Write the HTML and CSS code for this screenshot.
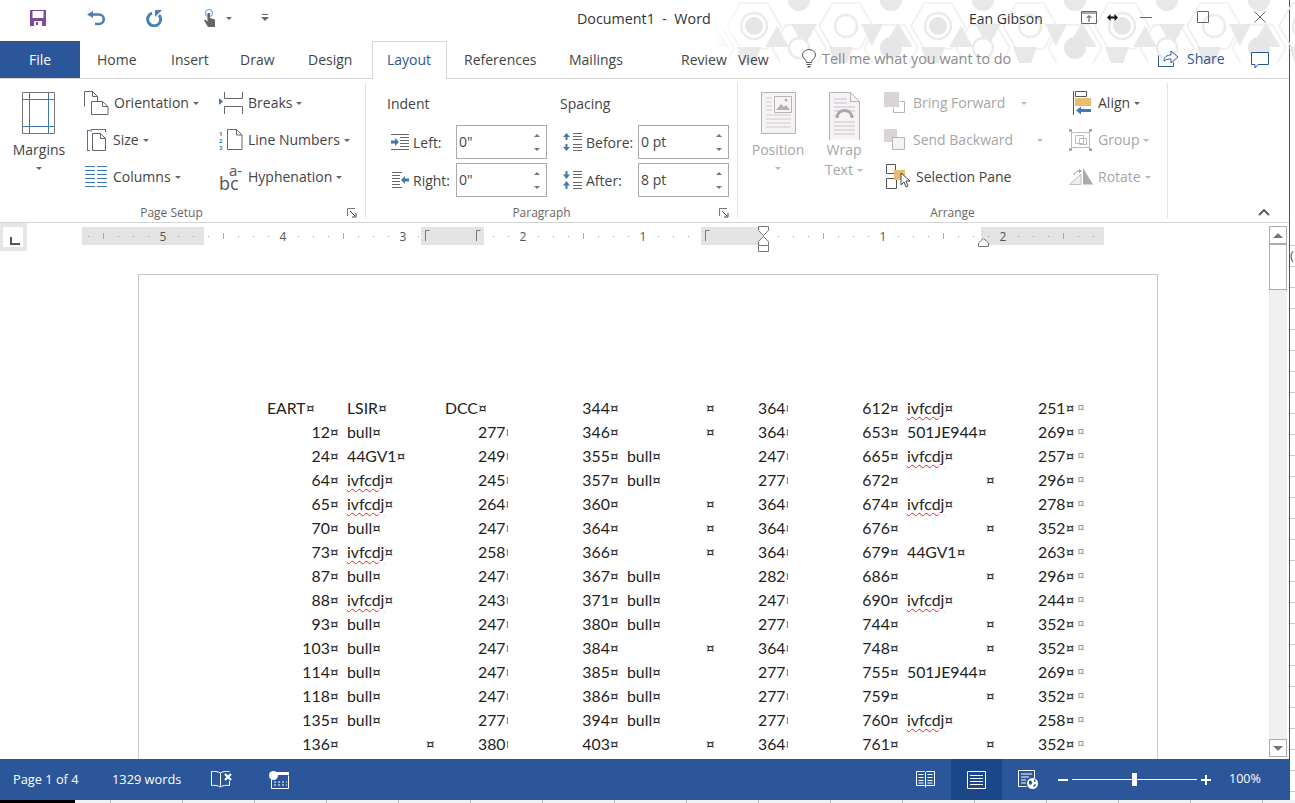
FILE: index.html
```html
<!DOCTYPE html>
<html lang="en">
<head>
    <meta charset="UTF-8">
    <title>Document1 - Word</title>
    <link rel="stylesheet" href="styles.css">
</head>
<body>

<div class="desktop">
    <div class="word">

        <!-- background art behind title bar -->
        <svg class="art" width="580" height="63" viewBox="0 0 580 63">
            <defs>
                <path id="hexa" d="M-27 0L-13.500 -23H13.500L27 0L13.500 23H-13.500Z"/>
                <pattern id="hex" width="184" height="63" patternUnits="userSpaceOnUse" x="84" y="0">
                    <g fill="none" stroke="#eeeeee" stroke-width="1.5">
                        <use href="#hexa" x="0" y="48"/>
                        <use href="#hexa" x="92" y="48"/>
                        <use href="#hexa" x="184" y="48"/>
                        <use href="#hexa" x="47" y="26"/>
                        <use href="#hexa" x="139" y="26"/>
                    </g>
                    <g fill="#e8e8e8">
                        <path d="M-8 24h26L5 47z"/>
                        <path d="M176 24h26L189 47z"/>
                        <path d="M84 47L99 23L114 47z"/>
                        <path d="M122 47h24l-6 16h-12z"/>
                        <path d="M30 47h24l-6 16h-12z"/>
                        <path d="M62 24h22L73 46z"/>
                        <path d="M150 47L162 26L174 47z"/>
                        <circle cx="0" cy="0" r="11"/>
                        <circle cx="184" cy="0" r="11"/>
                        <circle cx="92" cy="0" r="11"/>
                    </g>
                    <g fill="#fff" stroke="#ebebeb" stroke-width="2.500">
                        <circle cx="0" cy="48" r="10"/>
                        <circle cx="184" cy="48" r="10"/>
                        <circle cx="47" cy="26" r="11"/>
                        <circle cx="139" cy="26" r="13"/>
                    </g>
                    <circle cx="92" cy="48" r="11" fill="#e6e6e6"/>
                    <circle cx="139" cy="26" r="9" fill="#e6e6e6"/>
                </pattern>
            </defs>
            <rect width="580" height="63" fill="url(#hex)"/>
        </svg>

        <!-- title bar -->
        <div class="titlebar">
            <div class="qat">
                <svg width="16" height="16" viewBox="0 0 16 16"><path fill="#7c4a9e" d="M0 0h16v16H0z"/><path fill="#fff" d="M2.500 1h11v7h-11zM4 11h8v5H4z"/><path fill="#7c4a9e" d="M6 12h2v3H6z"/></svg>
                <svg class="q-undo" width="18" height="15" viewBox="0 0 18 15"><path fill="none" stroke="#4a7fb5" stroke-width="2.600" d="M5 3.500h7a4.500 4.500 0 0 1 0 9.500H8"/><path fill="#4a7fb5" d="M0 3.500L6 0v7z"/></svg>
                <svg class="q-redo" width="17" height="17" viewBox="0 0 17 17"><path fill="none" stroke="#4a7fb5" stroke-width="3" d="M6 3.200A6.500 6.500 0 1 0 13 5"/><path fill="#4a7fb5" d="M9 0v7l7-7z"/></svg>
                <svg class="q-touch" width="14" height="18" viewBox="0 0 14 18"><circle cx="6" cy="4" r="3.500" fill="none" stroke="#8fb6dc" stroke-width="1.500"/><path fill="#666" d="M4.500 4h2.500v5l5 1.500V18H5L1 11.500l1-1 2.500 2z"/></svg>
                <span class="caret q-caret"></span>
                <svg class="q-more" width="8" height="8" viewBox="0 0 8 8"><path fill="#666" d="M1 0h6v1H1zM0 3h8L4 7z"/></svg>
            </div>
            <div class="doc-title">Document1&nbsp; -&nbsp; Word</div>
            <div class="user">Ean Gibson</div>
            <div class="win-btns">
                <svg width="16" height="13" viewBox="0 0 16 13"><path fill="none" stroke="#666" d="M.5.5h15v12H.5z"/><path fill="#aaa" d="M1 1h14v2H1z"/><path fill="none" stroke="#444" d="M8 11V5M5.500 7L8 4.500 10.500 7"/></svg>
                <svg class="w-cursor" width="11" height="7" viewBox="0 0 11 7"><path fill="#111" d="M0 3.500L3.500 0v2.500h4V0L11 3.500 7.500 7V4.500h-4V7z"/></svg>
                <svg class="w-min" width="12" height="1"><path fill="#666" d="M0 0h12v1H0z"/></svg>
                <svg class="w-max" width="12" height="12" viewBox="0 0 12 12"><path fill="none" stroke="#666" d="M.5.5h11v11H.5z"/></svg>
                <svg class="w-close" width="12" height="12" viewBox="0 0 12 12"><path fill="none" stroke="#666" d="M.5.5l11 11M11.500.5l-11 11"/></svg>
            </div>
        </div>

        <!-- tabs -->
        <div class="tabs">
            <div class="tab tab-file">File</div>
            <div class="tab tab-home">Home</div>
            <div class="tab tab-insert">Insert</div>
            <div class="tab tab-draw">Draw</div>
            <div class="tab tab-design">Design</div>
            <div class="tab tab-layout">Layout</div>
            <div class="tab tab-refs">References</div>
            <div class="tab tab-mail">Mailings</div>
            <div class="tab tab-review">Review</div>
            <div class="tab tab-view">View</div>
            <div class="tell">
                <svg width="14" height="19" viewBox="0 0 14 19"><path fill="#fff" stroke="#555" d="M4.500 13.500c0-3-4-4-4-7.500a6.500 5.500 0 0 1 13 0c0 3.500-4 4.500-4 7.500z"/><path fill="#555" d="M4.500 15h5v1h-5zM5.500 17h3v1.500h-3z"/></svg>
                <span>Tell me what you want to do</span>
            </div>
            <div class="share">
                <svg width="21" height="17" viewBox="0 0 21 17"><path fill="none" stroke="#2b579a" d="M.5 5.500v11h15v-4"/><path fill="#fff" stroke="#2b579a" d="M6 11c0-4 3-6 7-6V1l7 6-7 6V9c-3 0-5 .5-7 2z"/></svg>
                <span>Share</span>
            </div>
            <svg class="comment" width="18" height="17" viewBox="0 0 18 17"><path fill="#fff" stroke="#2b579a" d="M.5.5h17v12H7l-3 3.500v-3.500H.5z"/></svg>
        </div>

        <!-- ribbon -->
        <div class="ribbon">

            <div class="group group-setup">
                <div class="group-body">
                    <div class="big big-margins">
                        <svg width="34" height="42" viewBox="0 0 34 42"><path fill="#fff" stroke="#777" d="M.5.5h32v41H.5z"/><path fill="none" stroke="#3f78b5" d="M7.500 1v40M26.500 1v40M1 7.500h32M1 34.500h32"/></svg>
                        <span>Margins</span>
                        <span class="caret"></span>
                    </div>
                    <div class="col col-page">
                        <div class="item"><svg width="25" height="24" viewBox="0 0 25 24"><path fill="#fff" stroke="#666" d="M.5 15.500V.5h8l5 5v5"/><path fill="none" stroke="#666" d="M8.500.5v5h5"/><path fill="#fff" stroke="#666" d="M7.500 10.500h11l5.500 5v8H7.500z"/><path fill="none" stroke="#666" d="M18.500 10.500v5h5.500"/></svg><span>Orientation</span><span class="caret"></span></div>
                        <div class="item item-size"><svg width="19" height="22" viewBox="0 0 19 22"><path fill="none" stroke="#3f78b5" d="M.5 2v20M0 1.500h3M0 21.500h3M4 .5h15M4 0v3M18.500 0v3"/><path fill="#fff" stroke="#666" d="M5.500 4.500h8l5 5v12h-13z"/><path fill="none" stroke="#666" d="M13.500 4.500v5h5"/></svg><span>Size</span><span class="caret"></span></div>
                        <div class="item item-cols"><svg width="22" height="21" viewBox="0 0 22 21"><path fill="none" stroke="#3f78b5" d="M0 .5h10M12 .5h10M0 4.500h10M12 4.500h10M0 8.500h10M12 8.500h10M0 12.500h10M12 12.500h10M0 16.500h10M12 16.500h10M0 20.500h10M12 20.500h10"/></svg><span>Columns</span><span class="caret"></span></div>
                    </div>
                    <div class="col col-breaks">
                        <div class="item"><svg width="24" height="22" viewBox="0 0 24 22"><path fill="#3f78b5" d="M0 6l4 3.500L0 13z"/><path fill="none" stroke="#666" d="M5.500 0v6.500h18V0M5.500 22v-7.500h18V22"/></svg><span>Breaks</span><span class="caret"></span></div>
                        <div class="item"><svg width="24" height="21" viewBox="0 0 24 21"><path fill="#fff" stroke="#666" d="M8.500.5h9l5.500 5.500v14.500H8.500z"/><path fill="none" stroke="#666" d="M17.500.5V6h5.500"/><text x="0" y="6.500" class="ln">1</text><text x="0" y="13.500" class="ln">2</text><text x="0" y="20.500" class="ln">3</text></svg><span>Line Numbers</span><span class="caret"></span></div>
                        <div class="item"><span class="hy"><i>a-</i><b>bc</b></span><span>Hyphenation</span><span class="caret"></span></div>
                    </div>
                </div>
                <div class="group-label">Page Setup<svg class="launcher" width="10" height="10" viewBox="0 0 10 10"><path fill="none" stroke="#777" d="M.5 8V.5H8"/><path fill="none" stroke="#444" d="M3 3l5 5M5 9h4V5"/></svg></div>
            </div>

            <div class="group group-para">
                <div class="group-body para-grid">
                    <div class="para-col para-indent">
                        <div class="para-head">Indent</div>
                        <div class="field">
                            <svg width="18" height="16" viewBox="0 0 18 16"><path fill="#666" d="M0 0h18v1H0zM9 3h9v1H9zM9 6h9v1H9zM9 9h9v1H9zM9 12h9v1H9zM0 15h18v1H0z"/><path fill="#3f78b5" d="M0 6.500h4V4l4 4-4 4V9.500H0z"/></svg>
                            <label>Left:</label>
                            <div class="spin"><span>0"</span><i class="up"></i><i class="down"></i></div>
                        </div>
                        <div class="field">
                            <svg width="18" height="16" viewBox="0 0 18 16"><path fill="#666" d="M1 0h10v1H1zM1 3h8v1H1zM1 6h8v1H1zM1 9h8v1H1zM1 12h8v1H1zM1 15h10v1H1z"/><path fill="#3f78b5" d="M18 6.500h-4V4l-4 4 4 4V9.500h4z"/></svg>
                            <label>Right:</label>
                            <div class="spin"><span>0"</span><i class="up"></i><i class="down"></i></div>
                        </div>
                    </div>
                    <div class="para-col para-spacing">
                        <div class="para-head">Spacing</div>
                        <div class="field">
                            <svg width="20" height="20" viewBox="0 0 20 20"><path fill="#666" d="M11 1h9v1h-9zM11 4h9v1h-9zM11 7h9v1h-9zM11 12h9v1h-9zM11 15h9v1h-9zM11 18h9v1h-9z"/><path fill="#3f78b5" d="M1 5l3.500-4L8 5H5.500v3h-2V5zM1 15l3.500 4L8 15H5.500v-3h-2v3z"/></svg>
                            <label>Before:</label>
                            <div class="spin"><span>0 pt</span><i class="up"></i><i class="down"></i></div>
                        </div>
                        <div class="field">
                            <svg width="20" height="20" viewBox="0 0 20 20"><path fill="#666" d="M11 1h9v1h-9zM11 4h9v1h-9zM11 7h9v1h-9zM11 12h9v1h-9zM11 15h9v1h-9zM11 18h9v1h-9z"/><path fill="#3f78b5" d="M1 4.500h2.500V1h2v3.500H8L4.500 9zM1 15.500h2.500V19h2v-3.500H8L4.500 11z"/></svg>
                            <label>After:</label>
                            <div class="spin"><span>8 pt</span><i class="up"></i><i class="down"></i></div>
                        </div>
                    </div>
                </div>
                <div class="group-label">Paragraph<svg class="launcher" width="10" height="10" viewBox="0 0 10 10"><path fill="none" stroke="#777" d="M.5 8V.5H8"/><path fill="none" stroke="#444" d="M3 3l5 5M5 9h4V5"/></svg></div>
            </div>

            <div class="group group-arrange">
                <div class="group-body">
                    <div class="big big-pos off">
                        <svg width="35" height="42" viewBox="0 0 35 42"><path fill="#f6f2f6" stroke="#b5b5b5" d="M.5.5h34v41H.5z"/><path fill="#f6f2f6" stroke="#b5b5b5" d="M13.500 4.500h17v16h-17z"/><path fill="#b5b0b5" d="M15 18l5-6 3 3 2-2 4 5z"/><circle cx="25" cy="8" r="1.500" fill="#b5b0b5"/><path fill="none" stroke="#ccc" d="M5 6h6M5 10h6M5 14h6M5 18h6M5 23h25M5 27h25M5 31h25M5 35h25"/></svg>
                        <span>Position</span>
                        <span class="caret"></span>
                    </div>
                    <div class="big big-wrap off">
                        <svg width="31" height="50" viewBox="0 0 31 50"><path fill="#f6f2f6" stroke="#b5b5b5" d="M.5.5h21l9 9v40H.5z"/><path fill="none" stroke="#b5b5b5" d="M21.500.5v9h9"/><path fill="none" stroke="#c5c5c5" d="M5 7h13M5 11h13M5 15h21M5 19h6M20 19h6M5 24h2M24 24h2M5 30h21M5 34h21M5 38h21M5 42h21"/><path fill="none" stroke="#a8a8a8" stroke-width="3" d="M8 26c0-10 15-10 15 0"/></svg>
                        <span class="wrap-word">Wrap</span>
                        <span class="wrap-text">Text<span class="caret"></span></span>
                    </div>
                    <div class="col col-order">
                        <div class="item off order-fwd"><svg width="21" height="21" viewBox="0 0 21 21"><path fill="#d8d4d8" d="M0 0h15v15H0z"/><path fill="none" stroke="#b5b5b5" d="M15.500 9.500h5v11h-11v-5"/></svg><span>Bring Forward</span><span class="caret"></span></div>
                        <div class="item off order-back"><svg width="21" height="21" viewBox="0 0 21 21"><path fill="#d8d4d8" d="M0 0h13v13H0z"/><path fill="#f6f2f6" stroke="#b5b5b5" d="M8.500 8.500h12v12h-12z"/></svg><span>Send Backward</span><span class="caret"></span></div>
                        <div class="item order-pane"><svg width="25" height="25" viewBox="0 0 25 25"><path fill="#fff" stroke="#555" d="M.5.5h9v9h-9zM.5 14.500h10v10H.5z"/><path fill="#e8bd72" d="M8 6h11v10H8z"/><path fill="#fff" stroke="#444" d="M15 9v12l3-3 2 5 2-1-2-5h4z"/></svg><span>Selection Pane</span></div>
                    </div>
                    <div class="col col-align">
                        <div class="item item-align"><svg width="18" height="24" viewBox="0 0 18 24"><path fill="none" stroke="#555" d="M.5 0v24M2.500.5h11v5h-11z"/><path fill="#e8bd72" d="M2 7h16v8H2z"/><path fill="#3f78b5" d="M3 19.500L8 15.500v2.500h10v3H8v2.500z"/></svg><span>Align</span><span class="caret"></span></div>
                        <div class="item off item-group"><svg width="23" height="22" viewBox="0 0 23 22"><path fill="none" stroke="#bbb" d="M2.500 3.500h18v15h-18zM6.500 6.500h8v8h-8zM10.500 9.500h7v6h-7z"/><path fill="#aaa" d="M0 0h3v3H0zM20 0h3v3h-3zM0 19h3v3H0zM20 19h3v3h-3z"/></svg><span>Group</span><span class="caret"></span></div>
                        <div class="item off item-rotate"><svg width="24" height="17" viewBox="0 0 24 17"><path fill="#f0eef0" stroke="#c0c0c0" d="M.5 16.500L12 6v10.500z"/><path fill="#aaa" d="M14 0l10 16.500H14z"/><path fill="none" stroke="#999" d="M5 7c1-3 3-4 6-4"/><path fill="#999" d="M10 1l3 2-3 2z"/></svg><span>Rotate</span><span class="caret"></span></div>
                    </div>
                </div>
                <div class="group-label">Arrange</div>
            </div>

            <svg class="collapse" width="12" height="7" viewBox="0 0 12 7"><path fill="none" stroke="#555" stroke-width="1.800" d="M1 6l5-5 5 5"/></svg>
        </div>

        <!-- ruler, page and scrollbar -->
        <div class="main">
            <div class="main-left">
                <div class="ruler-row">
                    <div class="tab-stop"><span></span></div>
                    <svg class="ruler" width="1030" height="36" viewBox="82 222 1030 36">
                        <defs>
                            <pattern id="dots" width="15" height="36" patternUnits="userSpaceOnUse" x="88" y="222">
                                <path fill="#9a9a9a" d="M0 14h1v1H0z"/>
                            </pattern>
                            <pattern id="bars" width="60" height="36" patternUnits="userSpaceOnUse" x="103" y="222">
                                <path fill="#aaa" d="M0 11h1v6H0z"/>
                            </pattern>
                        </defs>
                        <path fill="#e3e3e3" d="M82 227h1022v18H82z"/>
                        <path fill="#fff" d="M204 227h217v18H204zM484 227h217v18H484zM763 227h218v18H763z"/>
                        <path fill="url(#dots)" d="M82 227h1022v18H82z"/>
                        <path fill="url(#bars)" d="M82 227h1022v18H82z"/>
                        <path fill="#fff" d="M278 227h10v18h-10zM398 227h10v18h-10zM518 227h10v18h-10zM638 227h10v18h-10zM878 227h10v18h-10z"/>
                        <path fill="#e3e3e3" d="M158 227h10v18h-10zM998 227h10v18h-10zM421 227h63v18h-63zM701 227h62v18h-62z"/>
                        <g class="rnum">
                            <text x="163" y="241">5</text><text x="283" y="241">4</text><text x="403" y="241">3</text>
                            <text x="523" y="241">2</text><text x="643" y="241">1</text><text x="883" y="241">1</text><text x="1003" y="241">2</text>
                        </g>
                        <path fill="none" stroke="#777" d="M425.500 241v-10.500h4M476.500 241v-10.500h4M705.500 241v-10.500h4"/>
                        <path fill="#fff" stroke="#777" d="M758.500 226.500h10v4l-5 5-5-5z"/>
                        <path fill="#fff" stroke="#777" d="M763.500 236.500l5 5v4h-10v-4z"/>
                        <path fill="#fff" stroke="#777" d="M758.500 245.500h10v6h-10z"/>
                        <path fill="#fff" stroke="#777" d="M983.500 238.500l5 4.500v3.500h-10V243z"/>
                    </svg>
                </div>
                <div class="doc-scroll">
                    <div class="page">
                        <table class="sheet">
                            <tr><td class="h">EART¤</td><td>LSIR¤</td><td class="h">DCC¤</td><td>344¤</td><td class="e">¤</td><td><span class="cut">364¤</span></td><td>612¤</td><td><u>ivfcdj</u>¤</td><td>251¤<em>¤</em></td></tr>
                            <tr><td>12¤</td><td>bull¤</td><td><span class="cut">277¤</span></td><td>346¤</td><td class="e">¤</td><td><span class="cut">364¤</span></td><td>653¤</td><td>501JE944¤</td><td>269¤<em>¤</em></td></tr>
                            <tr><td>24¤</td><td>44GV1¤</td><td><span class="cut">249¤</span></td><td>355¤</td><td>bull¤</td><td><span class="cut">247¤</span></td><td>665¤</td><td><u>ivfcdj</u>¤</td><td>257¤<em>¤</em></td></tr>
                            <tr><td>64¤</td><td><u>ivfcdj</u>¤</td><td><span class="cut">245¤</span></td><td>357¤</td><td>bull¤</td><td><span class="cut">277¤</span></td><td>672¤</td><td class="e">¤</td><td>296¤<em>¤</em></td></tr>
                            <tr><td>65¤</td><td><u>ivfcdj</u>¤</td><td><span class="cut">264¤</span></td><td>360¤</td><td class="e">¤</td><td><span class="cut">364¤</span></td><td>674¤</td><td><u>ivfcdj</u>¤</td><td>278¤<em>¤</em></td></tr>
                            <tr><td>70¤</td><td>bull¤</td><td><span class="cut">247¤</span></td><td>364¤</td><td class="e">¤</td><td><span class="cut">364¤</span></td><td>676¤</td><td class="e">¤</td><td>352¤<em>¤</em></td></tr>
                            <tr><td>73¤</td><td><u>ivfcdj</u>¤</td><td><span class="cut">258¤</span></td><td>366¤</td><td class="e">¤</td><td><span class="cut">364¤</span></td><td>679¤</td><td>44GV1¤</td><td>263¤<em>¤</em></td></tr>
                            <tr><td>87¤</td><td>bull¤</td><td><span class="cut">247¤</span></td><td>367¤</td><td>bull¤</td><td><span class="cut">282¤</span></td><td>686¤</td><td class="e">¤</td><td>296¤<em>¤</em></td></tr>
                            <tr><td>88¤</td><td><u>ivfcdj</u>¤</td><td><span class="cut">243¤</span></td><td>371¤</td><td>bull¤</td><td><span class="cut">247¤</span></td><td>690¤</td><td><u>ivfcdj</u>¤</td><td>244¤<em>¤</em></td></tr>
                            <tr><td>93¤</td><td>bull¤</td><td><span class="cut">247¤</span></td><td>380¤</td><td>bull¤</td><td><span class="cut">277¤</span></td><td>744¤</td><td class="e">¤</td><td>352¤<em>¤</em></td></tr>
                            <tr><td>103¤</td><td>bull¤</td><td><span class="cut">247¤</span></td><td>384¤</td><td class="e">¤</td><td><span class="cut">364¤</span></td><td>748¤</td><td class="e">¤</td><td>352¤<em>¤</em></td></tr>
                            <tr><td>114¤</td><td>bull¤</td><td><span class="cut">247¤</span></td><td>385¤</td><td>bull¤</td><td><span class="cut">277¤</span></td><td>755¤</td><td>501JE944¤</td><td>269¤<em>¤</em></td></tr>
                            <tr><td>118¤</td><td>bull¤</td><td><span class="cut">247¤</span></td><td>386¤</td><td>bull¤</td><td><span class="cut">277¤</span></td><td>759¤</td><td class="e">¤</td><td>352¤<em>¤</em></td></tr>
                            <tr><td>135¤</td><td>bull¤</td><td><span class="cut">277¤</span></td><td>394¤</td><td>bull¤</td><td><span class="cut">277¤</span></td><td>760¤</td><td><u>ivfcdj</u>¤</td><td>258¤<em>¤</em></td></tr>
                            <tr><td>136¤</td><td class="e">¤</td><td><span class="cut">380¤</span></td><td>403¤</td><td class="e">¤</td><td><span class="cut">364¤</span></td><td>761¤</td><td class="e">¤</td><td>352¤<em>¤</em></td></tr>
                        </table>
                    </div>
                </div>
            </div>
            <div class="scrollbar">
                <div class="sb-btn"><span class="sb-up"></span></div>
                <div class="sb-thumb"></div>
                <div class="sb-track"></div>
                <div class="sb-btn"><span class="sb-down"></span></div>
            </div>
        </div>

        <!-- status bar -->
        <div class="status">
            <span class="st-page">Page 1 of 4</span>
            <span class="st-words">1329 words</span>
            <svg class="st-proof" width="22" height="18" viewBox="0 0 22 18"><path fill="none" stroke="#fff" d="M.5.5c3-.5 6 0 9 1.500v14c-3-1.500-6-2-9-1.500zM9.500 2c2-1.500 5-2 9-1.500M18.500 10v4.500c-4-.5-7 0-9 1.500"/><path fill="none" stroke="#fff" stroke-width="2.200" d="M14 3l6 6M20 3l-6 6"/></svg>
            <svg class="st-macro" width="20" height="18" viewBox="0 0 20 18"><circle cx="4.500" cy="4.500" r="4.500" fill="#fff"/><path fill="#fff" d="M8 1h12v3H8z"/><path fill="none" stroke="#fff" d="M2.500 8.500v9h17v-13M5 11h2M9 11h2M13 11h2M17 11h1M5 14h2M9 14h2M13 14h2M17 14h1"/></svg>
            <div class="st-right">
                <div class="view-btn"><svg width="19" height="17" viewBox="0 0 19 17"><path fill="none" stroke="#fff" d="M.5.5h8l1 1 1-1h8v14h-8l-1 1-1-1h-8zM9.500 1.500v15M2.500 3.500h5M2.500 6.500h5M2.500 9.500h5M2.500 12h5M11.500 3.500h5M11.500 6.500h5M11.500 9.500h5M11.500 12h5"/></svg></div>
                <div class="view-btn on"><svg width="19" height="18" viewBox="0 0 19 18"><path fill="none" stroke="#fff" d="M.5.5h18v17H.5zM3 4.500h13M3 7.500h13M3 10.500h13M3 13.500h13"/></svg></div>
                <div class="view-btn"><svg width="20" height="19" viewBox="0 0 20 19"><path fill="none" stroke="#fff" d="M.5.5h16v8M.5.5v16h8M3 4h11M3 7h8M3 10h5M3 13h5"/><circle cx="14.500" cy="13.500" r="5.500" fill="#fff"/><path fill="#2b579a" d="M11 11c2-1 3 0 3 2s-2 2-3 1zM15 16c1-2 3-2 3-1-1 2-2 2-3 1zM16 9l2 2-2 1z"/></svg></div>
                <div class="zoom">
                    <i class="z-minus"></i>
                    <div class="z-track"><b></b></div>
                    <svg width="10" height="10" viewBox="0 0 10 10"><path fill="#fff" d="M0 4h10v2H0zM4 0h2v10H4z"/></svg>
                </div>
                <span class="st-zoom">100%</span>
            </div>
        </div>

    </div>

    <!-- what is peeking out behind the window -->
    <div class="behind-right"><span>(</span></div>
    <div class="behind-bottom"><span class="bb-black"></span><span class="bb-sheet"></span></div>
</div>

</body>
</html>
```

FILE: styles.css
```css
* {
    box-sizing: border-box;
}

body {
    margin: 0;
    background-color: #fff;
    font-family: 'Open Sans', 'Noto Sans', sans-serif;
    font-size: 14px;
    color: #444;
    overflow: hidden;
}

.desktop {
    position: relative;
    width: 1295px;
    height: 803px;
    overflow: hidden;
    background-color: #fff;
}

.word {
    position: relative;
    display: flex;
    flex-direction: column;
    width: 1290px;
    height: 800px;
    background: #fff;
    border-right: 1px solid #2b579a;
}

.art {
    position: absolute;
    top: 0;
    left: 715px;
    -webkit-mask-image: linear-gradient(90deg, transparent, #000 30px);
    mask-image: linear-gradient(90deg, transparent, #000 30px);
}

/* title bar */
.titlebar {
    position: relative;
    display: flex;
    align-items: center;
    height: 41px;
    flex: none;
    padding-bottom: 5px;
}

.qat {
    display: flex;
    align-items: center;
    width: 577px;
    padding-left: 30px;
}

.q-undo { margin-left: 41px; }
.q-redo { margin-left: 41px; }
.q-touch { margin-left: 40px; }
.q-caret { margin-left: 9px; }
.q-more { margin-left: 29px; }

.doc-title {
    width: 392px;
    font-size: 14.3px;
    color: #333;
}

.user {
    width: 112px;
    color: #333;
}

.win-btns {
    display: flex;
    align-items: center;
    margin-bottom: 2px;
}

.w-cursor { margin-left: 10px; }
.w-min { margin-left: 22px; }
.w-max { margin-left: 45px; }
.w-close { margin-left: 45px; }

/* tabs */
.tabs {
    position: relative;
    display: flex;
    height: 38px;
    flex: none;
    border-bottom: 1px solid #d4d4d4;
}

.tab {
    padding-top: 9px;
    color: #444;
    white-space: nowrap;
}

.tab-file {
    width: 80px;
    height: 37px;
    text-align: center;
    background-color: #2b579a;
    color: #fff;
}

.tab-home { width: 74px; padding-left: 17px; }
.tab-insert { width: 69px; padding-left: 17px; }
.tab-draw { width: 68px; padding-left: 17px; }
.tab-design { width: 81px; padding-left: 17px; }

.tab-layout {
    width: 75px;
    height: 38px;
    padding-left: 14px;
    padding-top: 8px;
    color: #2b579a;
    background: #fff;
    border: 1px solid #d4d4d4;
    border-bottom: 0;
}

.tab-refs { width: 105px; padding-left: 17px; }
.tab-mail { width: 112px; padding-left: 17px; }
.tab-review { width: 57px; padding-left: 17px; }
.tab-view { width: 81px; padding-left: 17px; }

.tell {
    display: flex;
    align-items: center;
    gap: 6px;
    width: 356px;
    padding-bottom: 2px;
    color: #8a8a8a;
    font-size: 14.4px;
}

.share {
    display: flex;
    align-items: center;
    gap: 8px;
    width: 93px;
    padding-bottom: 3px;
    color: #2b579a;
}

.comment {
    margin-top: 11px;
}

/* ribbon */
.ribbon {
    position: relative;
    display: flex;
    height: 144px;
    flex: none;
    border-bottom: 1px solid #d4d4d4;
}

.group {
    display: flex;
    flex-direction: column;
    height: 135px;
    margin-top: 4px;
    border-right: 1px solid #e2e2e2;
}

.group-setup { width: 366px; }
.group-para { width: 372px; }
.group-arrange { width: 430px; }

.group-body {
    display: flex;
    flex: none;
    height: 121px;
}

.group-label {
    position: relative;
    height: 14px;
    line-height: 18px;
    font-size: 12px;
    color: #666;
    text-align: center;
}

.group-setup .group-label { padding-right: 22px; }
.group-para .group-label { padding-right: 20px; }

.launcher {
    position: absolute;
    right: 8px;
    top: 4px;
}

.caret {
    display: inline-block;
    width: 0;
    height: 0;
    border-left: 3.5px solid transparent;
    border-right: 3.5px solid transparent;
    border-top: 3.5px solid #666;
}

.big {
    display: flex;
    flex-direction: column;
    align-items: center;
    padding-top: 9px;
    line-height: 20px;
}

.big svg {
    margin-bottom: 6px;
}

.big .caret {
    margin-top: 7px;
}

.big-margins { width: 78px; }
.big-pos { width: 80px; }
.big-wrap { width: 52px; }

/* the wrap text icon runs down behind its own label */
.big-wrap svg {
    margin-bottom: -2px;
}

.wrap-word {
    background: #fff;
    padding: 0 2px;
}

.wrap-text .caret {
    margin: 0 0 2px 4px;
    vertical-align: middle;
}

.off {
    color: #a6a6a6;
}

.off .caret {
    border-top-color: #b9b9b9;
}

.col {
    display: flex;
    flex-direction: column;
    padding-top: 1px;
}

.item {
    display: flex;
    align-items: center;
    height: 37px;
    white-space: nowrap;
}

.item svg {
    flex: none;
    margin-right: 5px;
}

.item .caret {
    margin-left: 4px;
    margin-top: 1px;
}

.col-page { width: 140px; margin-left: 6px; }
.col-breaks { width: 146px; margin-left: -5px; }

.item-size { padding-left: 3px; }
.item-size svg { margin-right: 7px; }
.item-cols { padding-left: 1px; }
.item-cols svg { margin-right: 6px; }

.ln {
    font-size: 6px;
    font-weight: 700;
    fill: #3f78b5;
}

.hy {
    position: relative;
    display: block;
    flex: none;
    width: 24px;
    height: 24px;
    margin-right: 5px;
    color: #555;
}

.hy i {
    position: absolute;
    top: -1px;
    left: 10px;
    font-style: normal;
    font-size: 15px;
    line-height: 12px;
}

.hy b {
    position: absolute;
    top: 12px;
    left: 0;
    font-weight: 400;
    font-size: 18px;
    line-height: 12px;
}

/* paragraph group */
.para-grid {
    padding-left: 21px;
}

.para-col {
    display: flex;
    flex-direction: column;
}

.para-indent { width: 173px; }
.para-spacing { width: 175px; }

.para-head {
    height: 40px;
    padding-top: 11px;
}

.field {
    display: flex;
    align-items: center;
    height: 38px;
}

.para-indent .field { padding-left: 4px; }
.para-indent .field svg { margin-right: 4px; }
.para-indent label { width: 43px; }
.para-spacing .field svg { margin-left: 2px; margin-right: 4px; }
.para-spacing label { width: 52px; }

.spin {
    position: relative;
    width: 91px;
    height: 34px;
    padding: 6px 0 0 2px;
    border: 1px solid #aaa;
    color: #444;
    background: #fff;
}

.spin i {
    position: absolute;
    right: 6px;
    width: 0;
    height: 0;
    border-left: 3px solid transparent;
    border-right: 3px solid transparent;
}

.spin .up { top: 8px; border-bottom: 3px solid #777; }
.spin .down { bottom: 7px; border-top: 3px solid #777; }

/* arrange group */
.col-order { width: 186px; margin-left: 14px; }
.col-align { width: 96px; }

.order-fwd .caret { margin-left: 16px; }
.order-back .caret { margin-left: 24px; }
.order-fwd svg, .order-back svg { margin-right: 8px; }
.order-pane { margin-left: 2px; }

.col-align .item svg { margin-right: 7px; }
.item-align { color: #444; padding-left: 3px; }
.item-group { margin-left: -1px; }
.col-align .item-group svg { margin-right: 6px; }
.item-rotate { margin-left: -1px; }
.col-align .item-rotate svg { margin-right: 5px; }

.collapse {
    position: absolute;
    right: 19px;
    top: 130px;
}

/* ruler + page + scrollbar */
.main {
    display: flex;
    flex: 1;
    min-height: 0;
}

.main-left {
    display: flex;
    flex-direction: column;
    flex: 1;
    min-width: 0;
}

.ruler-row {
    position: relative;
    height: 51px;
    flex: none;
}

.tab-stop {
    width: 27px;
    height: 28px;
    padding: 4px 3px 3px;
    background: #e6e6e6;
}

.tab-stop span {
    display: block;
    width: 20px;
    height: 20px;
    padding: 10px 0 0 7px;
    background: #fff;
}

.tab-stop span::before {
    content: "";
    display: block;
    width: 8px;
    height: 6px;
    border-left: 2px solid #555;
    border-bottom: 2px solid #555;
}

.ruler {
    position: absolute;
    left: 82px;
    top: -1px;
}

.rnum text {
    font-size: 12px;
    fill: #555;
    text-anchor: middle;
}

.doc-scroll {
    flex: 1;
    overflow: hidden;
}

.page {
    width: 1020px;
    height: 700px;
    margin-left: 138px;
    padding: 120px 0 0 128px;
    border: 1px solid #c6c6c6;
    background: #fff;
}

.sheet {
    table-layout: fixed;
    width: 840px;
    border-collapse: collapse;
    font-family: 'Lato', 'Open Sans', sans-serif;
    font-size: 15.8px;
    color: #222;
}

.sheet td {
    height: 24px;
    padding: 0;
    white-space: nowrap;
}

.sheet td:nth-child(3n+1) {
    width: 80px;
    padding-right: 8px;
    text-align: right;
}

.sheet td:nth-child(3n+2) {
    width: 98px;
    padding-right: 10px;
}

.sheet td:nth-child(3n) {
    width: 102px;
    padding-left: 33px;
}

.sheet td.h {
    padding: 0;
    text-align: left;
}

.sheet td.e {
    text-align: right;
}

.sheet u {
    text-decoration: underline wavy #e02828 1px;
    text-underline-offset: 2px;
}

.sheet em {
    position: relative;
    top: -2px;
    margin-left: 2px;
    font-style: normal;
    font-size: 14px;
    line-height: 1;
    color: #999;
}

.cut {
    display: block;
    width: 30px;
    overflow: hidden;
}

/* scrollbar */
.scrollbar {
    display: flex;
    flex-direction: column;
    flex: none;
    width: 18px;
    margin: 3px 2px 2px 0;
    background: #f0f0f0;
}

.sb-btn {
    display: flex;
    align-items: center;
    justify-content: center;
    height: 18px;
    flex: none;
    background: #fff;
    border: 1px solid #ababab;
}

.sb-up, .sb-down {
    width: 0;
    height: 0;
    border-left: 5px solid transparent;
    border-right: 5px solid transparent;
}

.sb-up { border-bottom: 5px solid #777; }
.sb-down { border-top: 5px solid #777; }

.sb-thumb {
    height: 46px;
    flex: none;
    background: #fff;
    border: 1px solid #ababab;
}

.sb-track {
    flex: 1;
}

/* status bar */
.status {
    display: flex;
    align-items: center;
    height: 41px;
    flex: none;
    padding-left: 13px;
    background-color: #2b579a;
    color: #fff;
    font-size: 12.8px;
}

.st-page, .st-words {
    width: 99px;
    margin-bottom: 2px;
}

.st-macro { margin-left: 36px; }

.st-right {
    display: flex;
    align-items: center;
    height: 100%;
    margin-left: auto;
}

.view-btn {
    display: flex;
    align-items: center;
    justify-content: center;
    width: 51px;
    height: 100%;
}

.view-btn.on {
    background-color: #19478a;
}

.zoom {
    display: flex;
    align-items: center;
    margin-left: 5px;
}

.z-minus {
    display: block;
    width: 10px;
    height: 2px;
    background: #fff;
}

.z-track {
    position: relative;
    width: 125px;
    height: 1px;
    margin: 0 4px;
    background: #fff;
}

.z-track b {
    position: absolute;
    left: 60px;
    top: -6px;
    width: 5px;
    height: 13px;
    background: #fff;
}

.st-zoom {
    width: 78px;
    padding-left: 18px;
    margin-bottom: 2px;
    font-size: 12.5px;
}

/* behind the window */
.behind-right {
    position: absolute;
    top: 225px;
    right: 0;
    width: 5px;
    height: 578px;
    background: repeating-linear-gradient(180deg, #fff 0, #fff 20px, #c8c8c8 20px, #c8c8c8 21px);
}

.behind-right span {
    position: absolute;
    top: 21px;
    left: 0;
    color: #555;
    font-size: 13px;
}

.behind-bottom {
    position: absolute;
    left: 0;
    bottom: 0;
    display: flex;
    width: 100%;
    height: 3px;
}

.bb-black {
    width: 75px;
    background: #000;
}

.bb-sheet {
    flex: 1;
    background: repeating-linear-gradient(90deg, #f1f1f1 0, #f1f1f1 35px, #bbb 35px, #bbb 36px, #f1f1f1 36px, #f1f1f1 72px);
}
```
